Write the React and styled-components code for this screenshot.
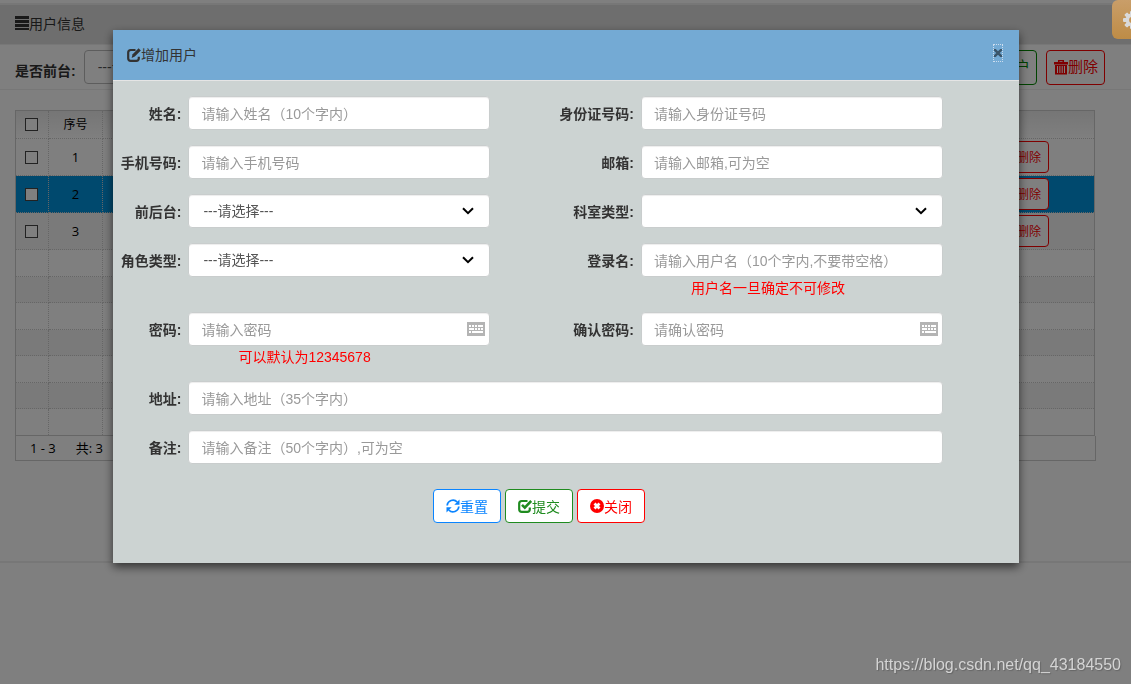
import React from "react";
import styled, { createGlobalStyle, css } from "styled-components";

const Global = createGlobalStyle`
  * { box-sizing: border-box; }
  body {
    margin: 0;
    background: #fff;
    color: #333;
    font: 14px/20px "Liberation Sans", "Noto Sans CJK SC", sans-serif;
  }
  button, input, select { font: inherit; color: inherit; }
`;

const uiFont = css`font-family: "Open Sans", "Noto Sans CJK SC", sans-serif;`;

const Page = styled.div`
  min-height: 100vh;
  border-top: 3px solid #fefefe;
`;
const TitleBar = styled.h1`
  display: flex;
  align-items: center;
  height: 42px;
  margin: 0;
  padding: 0 15px 2px;
  border-top: 2px solid #eee;
  border-bottom: 1px solid #eee;
  background: #dcdcdc;
  font-size: 14px;
  font-weight: 400;
`;
const Toolbar = styled.div`
  display: flex;
  align-items: center;
  height: 45px;
  padding: 0 26px 0 15px;
  border-bottom: 1px solid #eee;
  > label { font-weight: 700; margin-right: 8px; padding-top: 8px; }
`;
const Filter = styled.select`
  appearance: none;
  width: 180px;
  height: 34px;
  padding: 0 13px;
  margin-right: auto;
  border: 1px solid #bbb;
  border-radius: 4px;
  background: #fff;
  color: #555;
`;
const ToolButton = styled.button`
  display: flex;
  align-items: center;
  height: 35px;
  margin-left: 9px;
  padding: 0 6px 0 7px;
  border: 1px solid currentColor;
  border-radius: 4px;
  background: #fff;
  color: ${(p) => p.$color};
  font-size: 15px;
`;
const Content = styled.div`
  padding: 20px 35px 100px 15px;
  border-bottom: 2px solid #eee;
  ${uiFont}
`;
const Table = styled.table`
  width: calc(100% - 1px);
  table-layout: fixed;
  border-collapse: separate;
  border-spacing: 0;
  border: 1px solid #ccc;
  color: #000;
  font-size: 13px;
  line-height: 16px;
  th, td {
    height: 37px;
    padding: 0;
    text-align: center;
    border-bottom: 1px dotted #ccc;
    border-right: 1px dotted #ccc;
  }
  th { height: 28px; font-size: 12px; font-weight: 400; }
  th:nth-child(1) { width: 33px; }
  th:nth-child(2) { width: 54px; }
  th:last-child, td:last-child { border-right: 0; text-align: right; padding-right: 45px; }
  tr:last-child td { border-bottom: 0; }
  thead tr { background: linear-gradient(#ececec, #fff); }
`;
const Row = styled.tr`
  background: ${(p) => (p.$selected ? "#0092dc" : p.$shade ? "#f5f5f5" : "#fff")};
  ${(p) => p.$blank && css`&& td { height: ${p.$shade ? 26 : 27}px; }`}
  &&:last-child td { height: 26px; }
`;
const Tick = styled.input`
  appearance: none;
  display: block;
  width: 13px;
  height: 13px;
  margin: 0 0 0 9px;
  border: 1px solid #444;
  background: #fff;
`;
const RowButton = styled.button`
  width: 60px;
  height: 32px;
  padding: 1px 7px 0;
  border: 1px solid #f00;
  border-radius: 4px;
  background: #fff;
  color: #f00;
  font-size: 12px;
  text-align: right;
`;
const Footer = styled.div`
  display: flex;
  gap: 20px;
  height: 25px;
  padding: 0 14px;
  border: 1px solid #ccc;
  border-top: 0;
  color: #000;
  font-size: 13px;
  line-height: 24px;
`;

const Overlay = styled.div`
  position: fixed;
  inset: 0;
  padding: 30px 112px 0 113px;
  background: rgba(0, 0, 0, 0.5);
`;
const Dialog = styled.section`
  background: #ccd3d2;
  box-shadow: 0 4px 9px rgba(0, 0, 0, 0.6);
`;
const DialogHead = styled.header`
  display: flex;
  align-items: center;
  justify-content: space-between;
  height: 51px;
  padding: 0 16px 0 14px;
  border-bottom: 1px solid #e5e5e5;
  background: #74aad4;
  h2 { display: flex; align-items: center; margin: 0; font-size: 14px; font-weight: 400; }
`;
const Close = styled.button`
  display: grid;
  place-items: center;
  width: 10px;
  height: 18px;
  margin-bottom: 4px;
  padding: 0;
  border: 1px dotted #cde;
  background: none;
  color: #3a556a;
`;
const Form = styled.form`
  display: grid;
  grid-template-columns: 1fr 4fr 2fr 4fr 1fr;
  row-gap: 15px;
  padding: 15px 1px 40px 0;
`;
const Label = styled.label`
  grid-column: ${(p) => (p.$right ? 3 : 1)};
  padding: 8px 7px 0 0;
  font-weight: 700;
  text-align: right;
  white-space: nowrap;
`;
const Control = styled.div`
  position: relative;
  grid-column: ${(p) => (p.$wide ? "2 / 5" : p.$right ? 4 : 2)};
`;
const box = css`
  display: block;
  width: 100%;
  height: 34px;
  border: 1px solid #c9cdcd;
  border-radius: 4px;
  background: #fff;
  box-shadow: inset 0 1px 1px rgba(0, 0, 0, 0.075);
  color: #555;
`;
const Input = styled.input`
  ${box}
  padding: 2px 12px 0;
  &::placeholder { color: #999; opacity: 1; }
`;
const Select = styled.select`
  ${box}
  appearance: none;
  padding: 0 14px;
`;
const Adorn = styled.svg`
  position: absolute;
  pointer-events: none;
  top: ${(p) => p.$top}px;
  right: ${(p) => p.$right}px;
`;
const Hint = styled.p`
  margin: 0;
  padding: 1px 0 0 50px;
  height: 20px;
  color: #f00;
`;
const Actions = styled.div`
  grid-column: 1 / -1;
  display: flex;
  gap: 4px;
  padding: 10px 0 0 320px;
`;
const Action = styled.button`
  display: flex;
  align-items: center;
  height: 34px;
  padding: 1px 12px 0;
  border: 1px solid currentColor;
  border-radius: 4px;
  background: #fff;
  color: ${(p) => p.$color};
`;
const Settings = styled.button`
  position: fixed;
  top: 0;
  right: 0;
  width: 19px;
  height: 39px;
  padding: 0 0 0 10px;
  border: 0;
  border-radius: 6px 0 0 6px;
  background: linear-gradient(#c99e69, #be8c46);
  overflow: hidden;
  svg { display: block; }
`;
const Mark = styled.div`
  position: fixed;
  right: 10px;
  bottom: 9px;
  color: #d4d4d4;
  font-size: 16px;
  text-shadow: 1px 1px 1px #666;
`;

const icons = {
  list: <path d="M0 0h14v3H0zM0 4h14v3H0zM0 8h14v3H0zM0 12h14v2H0z" />,
  edit: (
    <>
      <path d="M8.500 2H3.800Q1.200 2 1.200 4.600v5.600q0 2.600 2.600 2.600h5.400q2.600 0 2.600-2.600V8.800" fill="none" stroke="currentColor" strokeWidth="2.200" />
      <path d="M4.600 9.900l1-3.600L11.600.3l2.200 2.200-6 6z" />
    </>
  ),
  check: (
    <>
      <path d="M9.500 2H3.800Q1.200 2 1.200 4.600v5.600q0 2.600 2.600 2.600h5.400q2.600 0 2.600-2.600V8.500" fill="none" stroke="currentColor" strokeWidth="2.200" />
      <path d="M4 5.800l2.800 2.800L13.200 2" fill="none" stroke="currentColor" strokeWidth="2.600" />
    </>
  ),
  refresh: (
    <>
      <path d="M1.200 6.500A5.800 5.800 0 0 1 11.200 3M12.800 7.500A5.800 5.800 0 0 1 2.800 11" fill="none" stroke="currentColor" strokeWidth="1.800" />
      <path d="M13.500.5v5.300H8.300zM.5 13.500V8.200h5.200z" />
    </>
  ),
  remove: (
    <>
      <circle cx="7" cy="7" r="7" />
      <path d="M4.500 4.500l5 5M9.500 4.500l-5 5" stroke="#fff" strokeWidth="2.800" />
    </>
  ),
  trash: (
    <path d="M4 0h6v2h4v2.500H0V2h4zM5.500 1.200V2h3v-.8zM1 5h12v9.500H1zM3 6v7h1V6zM5.400 6v7h1V6zM7.700 6v7h1V6zM10 6v7h1V6z" fillRule="evenodd" />
  ),
};
const Icon = ({ name }) => (
  <svg width="14" height="15" viewBox="0 0 14 15" fill="currentColor" aria-hidden="true">
    {icons[name]}
  </svg>
);

const Gear = () => (
  <svg width="20" height="20" viewBox="-10 -10 20 20" fill="#d9d9d9" aria-hidden="true">
    {[0, 45, 90, 135].map((a) => (
      <rect key={a} x="-2" y="-9" width="4" height="18" rx="1" transform={`rotate(${a})`} />
    ))}
    <circle r="6.500" />
    <circle r="3" fill="#c59455" />
  </svg>
);

const Chevron = () => (
  <Adorn $top={13} $right={16} width="12" height="8" viewBox="0 0 12 8">
    <path d="M1 1.200l5 5 5-5" fill="none" stroke="#000" strokeWidth="2" />
  </Adorn>
);
const Keyboard = () => (
  <Adorn $top={10} $right={5} width="18" height="14" viewBox="0 0 18 14">
    <path d="M0 0h18v14H0z" fill="#b4b4b4" />
    <path
      d="M2 3h2v2H2zM5 3h2v2H5zM8 3h2v2H8zM11 3h5v2h-5zM2 6h5v2H2zM8 6h2v2H8zM11 6h2v2h-2zM14 6h2v2h-2zM2 9h2v2H2zM5 9h11v2H5z"
      fill="#fff"
    />
  </Adorn>
);

const fields = [
  { id: "name", label: "姓名:", hint: "请输入姓名（10个字内）" },
  { id: "card", label: "身份证号码:", hint: "请输入身份证号码", right: true },
  { id: "phone", label: "手机号码:", hint: "请输入手机号码" },
  { id: "mail", label: "邮箱:", hint: "请输入邮箱,可为空", right: true },
  { id: "side", label: "前后台:", option: "---请选择---" },
  { id: "dept", label: "科室类型:", option: "", right: true },
  { id: "role", label: "角色类型:", option: "---请选择---" },
  { id: "login", label: "登录名:", hint: "请输入用户名（10个字内,不要带空格）", note: "用户名一旦确定不可修改", right: true },
  { id: "pass", label: "密码:", hint: "请输入密码", note: "可以默认为12345678", type: "password" },
  { id: "pass2", label: "确认密码:", hint: "请确认密码", type: "password", right: true },
  { id: "addr", label: "地址:", hint: "请输入地址（35个字内）", wide: true },
  { id: "memo", label: "备注:", hint: "请输入备注（50个字内）,可为空", wide: true },
];

const Field = ({ id, label, hint, option, note, type = "text", right, wide }) => (
  <>
    <Label htmlFor={id} $right={right}>{label}</Label>
    <Control $right={right} $wide={wide}>
      {option !== undefined ? (
        <>
          <Select id={id}><option>{option}</option></Select>
          <Chevron />
        </>
      ) : (
        <Input id={id} type={type} placeholder={hint} />
      )}
      {type === "password" && <Keyboard />}
      {note && <Hint>{note}</Hint>}
    </Control>
  </>
);

export default function App() {
  return (
    <>
      <Global />
      <Page>
        <TitleBar><Icon name="list" />用户信息</TitleBar>
        <Toolbar>
          <label htmlFor="filter">是否前台:</label>
          <Filter id="filter"><option>---请选择---</option></Filter>
          <ToolButton $color="#080">增加用户</ToolButton>
          <ToolButton $color="#f00"><Icon name="trash" />删除</ToolButton>
        </Toolbar>
        <Content>
          <Table>
            <thead>
              <tr>
                <th><Tick type="checkbox" aria-label="全选" /></th>
                <th>序号</th>
                <th />
              </tr>
            </thead>
            <tbody>
              {[1, 2, 3].map((n) => (
                <Row key={n} $selected={n === 2} $shade={n === 3}>
                  <td><Tick type="checkbox" aria-label={`${n}`} /></td>
                  <td>{n}</td>
                  <td><RowButton>删除</RowButton></td>
                </Row>
              ))}
              {[0, 1, 2, 3, 4, 5, 6].map((n) => (
                <Row key={`b${n}`} $blank $shade={n % 2 === 1}><td /><td /><td /></Row>
              ))}
            </tbody>
          </Table>
          <Footer><span>1 - 3</span><span>共: 3</span></Footer>
        </Content>
      </Page>
      <Overlay>
        <Dialog role="dialog" aria-labelledby="dialog-title">
          <DialogHead>
            <h2 id="dialog-title"><Icon name="edit" />增加用户</h2>
            <Close aria-label="关闭">
              <svg width="8" height="8" viewBox="0 0 8 8" aria-hidden="true">
                <path d="M0 0l8 8M8 0L0 8" stroke="currentColor" strokeWidth="2.500" />
              </svg>
            </Close>
          </DialogHead>
          <Form>
            {fields.map((f) => <Field key={f.id} {...f} />)}
            <Actions>
              <Action type="button" $color="#0a84ff"><Icon name="refresh" />重置</Action>
              <Action type="button" $color="#1f8b1f"><Icon name="check" />提交</Action>
              <Action type="button" $color="#f00"><Icon name="remove" />关闭</Action>
            </Actions>
          </Form>
        </Dialog>
      </Overlay>
      <Settings aria-label="设置"><Gear /></Settings>
      <Mark>https://blog.csdn.net/qq_43184550</Mark>
    </>
  );
}
